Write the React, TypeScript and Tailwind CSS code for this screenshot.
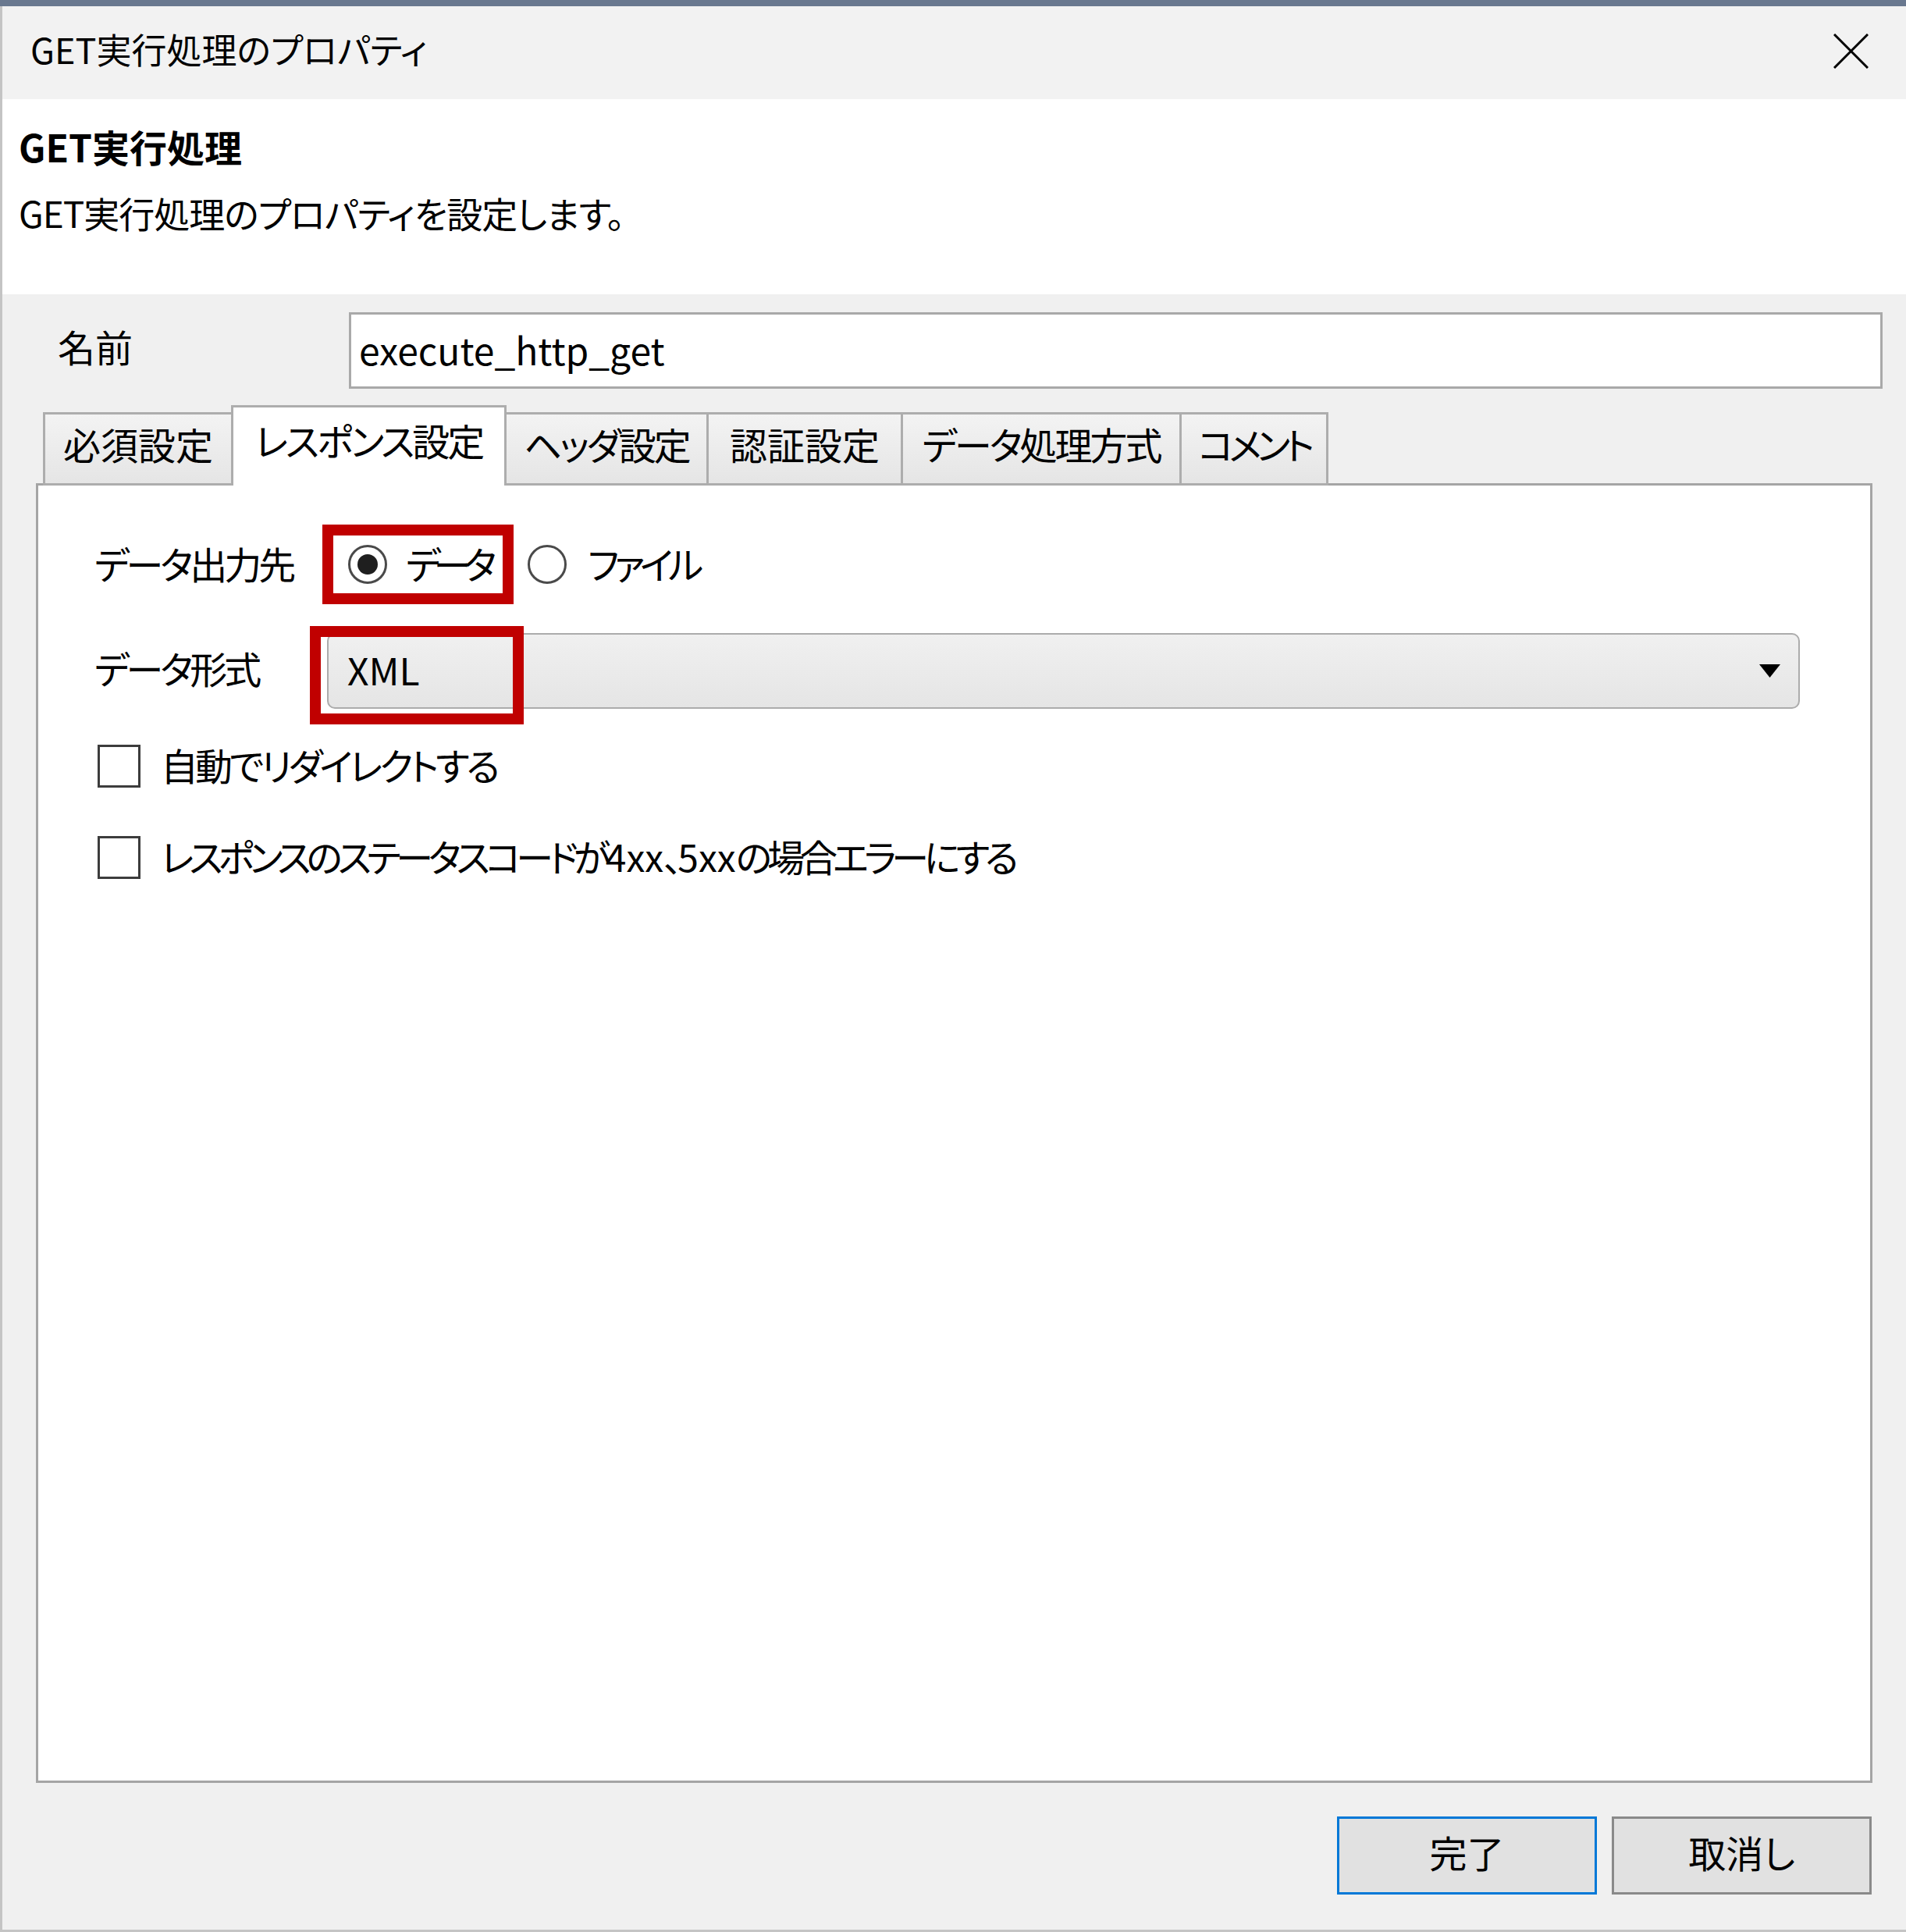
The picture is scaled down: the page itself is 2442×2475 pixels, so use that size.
const tabs = [
  { label: '必須設定', w: 'w-[241px]', track: 'tracking-normal' },
  { label: 'レスポンス設定', w: 'w-[353px]', track: 'tracking-[-3px]', active: true },
  { label: 'ヘッダ設定', w: 'w-[259px]', track: 'tracking-[-3px]' },
  { label: '認証設定', w: 'w-[249px]', track: 'tracking-normal' },
  { label: 'データ処理方式', w: 'w-[357px]', track: 'tracking-[-3px]' },
  { label: 'コメント', w: 'w-[188px]', track: 'tracking-[-6px]' },
]

const Radio = ({ checked }: { checked?: boolean }) => (
  <span className="flex h-[50px] w-[50px] shrink-0 items-center justify-center rounded-full border-[3px] border-[#4a4a4a] bg-white">
    {checked && <span className="h-[26px] w-[26px] rounded-full bg-[#1f1f1f]" />}
  </span>
)

const Checkbox = () => <span className="h-[55px] w-[55px] shrink-0 border-[3px] border-[#3c3c3c] bg-white" />

export default function App() {
  return (
    <div className="flex h-[2475px] w-[2442px] flex-col bg-[#f0f0f0] font-['Noto_Sans_CJK_JP',sans-serif] text-black [font-feature-settings:'palt']">
      {/* strip of the window behind */}
      <div className="h-[8px] shrink-0 bg-[#69788f]" />

      <div className="flex flex-1 flex-col border-b-[3px] border-l-[3px] border-[#c4c4c4]">
        {/* title bar */}
        <div className="flex h-[119px] shrink-0 items-center justify-between bg-[#f2f2f2] pl-[36px] pr-[48px]">
          <span className="pb-[10px] text-[45px] leading-none">GET実行処理のプロパティ</span>
          <svg width="45" height="45" viewBox="0 0 45 45" className="mb-[4px]">
            <path d="M1 1 L44 44 M44 1 L1 44" stroke="#000" strokeWidth="3" fill="none" />
          </svg>
        </div>

        {/* header */}
        <div className="h-[250px] shrink-0 bg-white pl-[21px] pt-[36px]">
          <div className="text-[48px] font-bold leading-none">GET実行処理</div>
          <div className="mt-[38px] text-[46px] leading-none tracking-[-1px]">GET実行処理のプロパティを設定します。</div>
        </div>

        {/* body */}
        <div className="flex flex-1 flex-col px-[43px] pt-[23px] text-[48px] leading-none">
          <div className="flex items-center">
            <span className="w-[401px] pb-[12px] pl-[28px]">名前</span>
            <div className="-mr-[13px] flex h-[98px] flex-1 items-center border-[3px] border-[#a9a9a9] bg-white pb-[4px] pl-[10px]">
              execute_http_get
            </div>
          </div>

          <div className="relative z-10 mt-[21px] -mb-[3px] flex items-end pl-[9px]">
            {tabs.map((t, i) =>
              t.active ? (
                <div
                  key={t.label}
                  className={`${t.w} ${t.track} flex h-[103px] items-center justify-center border-x-[3px] border-t-[3px] border-[#adadad] bg-white pb-[18px]`}
                >
                  {t.label}
                </div>
              ) : (
                <div
                  key={t.label}
                  className={`${t.w} ${t.track} flex h-[94px] items-center justify-center border-y-[3px] border-[#adadad] bg-gradient-to-b from-[#f3f3f3] to-[#e5e5e5] pb-[14px] ${
                    i === 0 ? 'border-l-[3px]' : 'border-r-[3px]'
                  }`}
                >
                  {t.label}
                </div>
              )
            )}
          </div>

          <div className="flex flex-1 flex-col border-[3px] border-[#a5a5a5] bg-white pl-[72px] pr-[90px] pt-[50px] tracking-[-4px]">
            <div className="flex items-center">
              <span className="w-[292px] pb-[4px]">データ出力先</span>
              <div className="flex h-[102px] w-[245px] items-center gap-[24px] border-[14px] border-[#c00000] pl-[19px]">
                <Radio checked />
                <span className="pb-[4px] tracking-[-9px]">データ</span>
              </div>
              <div className="ml-[18px] flex items-center gap-[27px]">
                <Radio />
                <span className="pb-[4px] tracking-[-6px]">ファイル</span>
              </div>
            </div>

            <div className="mt-[37px] flex items-center">
              <span className="w-[298px] pb-[10px]">データ形式</span>
              <div className="relative flex h-[97px] flex-1 items-center justify-between rounded-[10px] border-[2px] border-[#acacac] bg-gradient-to-b from-[#f0f0f0] to-[#e5e5e5] pl-[24px] pr-[23px] tracking-normal">
                <span className="pb-[6px]">XML</span>
                <svg width="27" height="17" viewBox="0 0 27 17">
                  <polygon points="0,0 27,0 13.5,17" fill="#000" />
                </svg>
                <div className="absolute -left-[24px] -top-[11px] h-[126px] w-[274px] border-[14px] border-[#c00000]" />
              </div>
            </div>

            <div className="mt-[46px] flex items-center gap-[26px] pl-[4px]">
              <Checkbox />
              <span className="pb-[6px]">自動でリダイレクトする</span>
            </div>
            <div className="mt-[62px] flex items-center gap-[26px] pl-[4px]">
              <Checkbox />
              <span className="pb-[6px] tracking-[-6px]">
                レスポンスのステータスコードが<span className="tracking-normal">4xx</span>、
                <span className="tracking-normal">5xx</span>の場合エラーにする
              </span>
            </div>
          </div>

          <div className="mb-[45px] mt-[43px] flex justify-end gap-[19px] pr-[1px]">
            <button className="flex h-[100px] w-[333px] items-center justify-center border-[3px] border-[#0078d7] bg-[#e1e1e1] pb-[10px]">
              完了
            </button>
            <button className="flex h-[100px] w-[333px] items-center justify-center border-[3px] border-[#8a8a8a] bg-[#e1e1e1] pb-[10px]">
              取消し
            </button>
          </div>
        </div>
      </div>
    </div>
  )
}
